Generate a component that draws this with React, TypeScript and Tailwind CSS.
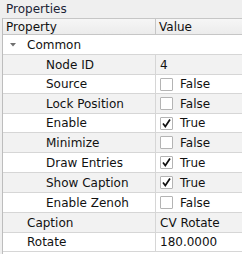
const rows: {
	name: string;
	level: number;
	h: string;
	kind?: "group" | "text" | "check";
	value?: string;
	checked?: boolean;
}[] = [
	{ name: "Common", level: 0, h: "h-[20px]", kind: "group" },
	{ name: "Node ID", level: 1, h: "h-[20px]", kind: "text", value: "4" },
	{ name: "Source", level: 1, h: "h-[19px]", kind: "check", checked: false },
	{ name: "Lock Position", level: 1, h: "h-[20px]", kind: "check", checked: false },
	{ name: "Enable", level: 1, h: "h-[19px]", kind: "check", checked: true },
	{ name: "Minimize", level: 1, h: "h-[20px]", kind: "check", checked: false },
	{ name: "Draw Entries", level: 1, h: "h-[20px]", kind: "check", checked: true },
	{ name: "Show Caption", level: 1, h: "h-[20px]", kind: "check", checked: true },
	{ name: "Enable Zenoh", level: 1, h: "h-[20px]", kind: "check", checked: false },
	{ name: "Caption", level: 0, h: "h-[20px]", kind: "text", value: "CV Rotate" },
	{ name: "Rotate", level: 0, h: "h-[19px]", kind: "text", value: "180.0000" },
];

function CheckBox({ checked }: { checked: boolean }) {
	return (
		<div className="w-[13px] h-[13px] border border-[#b4b4b4] bg-white flex items-center justify-center rounded-[1px]">
			{checked && (
				<svg width="11" height="11" viewBox="0 0 11 11">
					<path
						d="M2 5.5 L4.3 8.5 L9 1.5"
						fill="none"
						stroke="#111"
						strokeWidth="1.7"
					/>
				</svg>
			)}
		</div>
	);
}

export default function App() {
	return (
		<div
			className="w-[242px] h-[254px] bg-[#efefef] flex flex-col overflow-hidden text-[12px] text-[#111] leading-none"
			style={{ fontFamily: '"DejaVu Sans", sans-serif' }}
		>
			<div className="h-[18px] pl-[6px] flex items-center text-[#1c2436]">
				Properties
			</div>
			<div className="flex-1 ml-[2px] border-l border-[#bdbdbd] bg-white flex flex-col">
				<div className="h-[17px] flex border-y border-[#c6c6c6] bg-gradient-to-b from-[#f6f6f6] to-[#ececec]">
					<div className="w-[153px] border-r border-[#c6c6c6] pl-[3px] flex items-center">
						Property
					</div>
					<div className="flex-1 pl-[3px] flex items-center">Value</div>
				</div>
				{rows.map((r, i) => (
					<div
						key={r.name}
						className={`${r.h} flex border-b border-[#d6d6d6] ${
							i % 2 === 1 ? "bg-[#f2f2f2]" : "bg-white"
						}`}
					>
						<div
							className={`w-[153px] flex items-center ${
								r.level === 1 ? "pl-[43px]" : "pl-[24px]"
							} ${r.kind === "group" ? "" : "border-r border-[#d6d6d6]"} relative`}
						>
							{r.kind === "group" && (
								<svg
									className="absolute left-[7px] top-[8px]"
									width="6"
									height="4"
									viewBox="0 0 6 4"
								>
									<path d="M0 0 L6 0 L3 3.5 Z" fill="#6f6f6f" />
								</svg>
							)}
							{r.name}
						</div>
						{r.kind === "text" && (
							<div className="flex-1 pl-[4px] flex items-center">{r.value}</div>
						)}
						{r.kind === "check" && (
							<div className="flex-1 pl-[4px] flex items-center gap-[7px]">
								<CheckBox checked={!!r.checked} />
								<span>{r.checked ? "True" : "False"}</span>
							</div>
						)}
					</div>
				))}
			</div>
		</div>
	);
}
